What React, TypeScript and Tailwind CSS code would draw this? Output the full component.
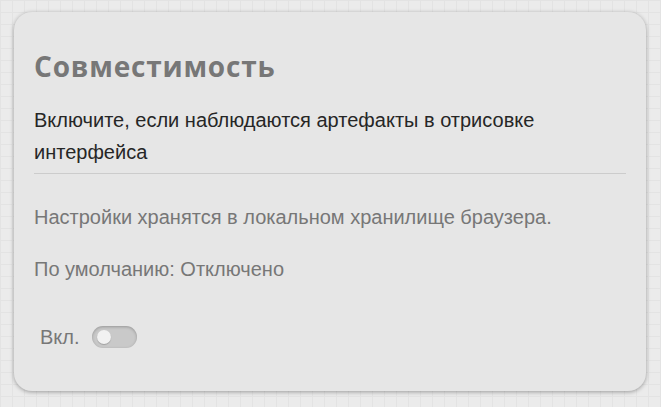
import React, { useState } from 'react';

const Toggle: React.FC<{ on: boolean; onChange: (v: boolean) => void }> = ({ on, onChange }) => (
  <button
    type="button"
    onClick={() => onChange(!on)}
    className={
      'relative h-[22px] w-[45px] rounded-full shadow-[inset_0_1px_3px_rgba(0,0,0,0.25)] ' +
      (on ? 'bg-[#8a8a8a]' : 'bg-[#c9c9c9]')
    }
  >
    <span
      className={
        'absolute top-[4px] h-[14px] w-[14px] rounded-full bg-[#f2f2f2] shadow-[0_1px_1px_rgba(0,0,0,0.2)] ' +
        (on ? 'left-[26px]' : 'left-[5px]')
      }
    />
  </button>
);

export default function App() {
  const [enabled, setEnabled] = useState(false);

  return (
    <div
      className="min-h-[407px] w-full bg-[#ebebeb] px-[14px] pt-[12px] pb-[16px]"
      style={{
        backgroundImage:
          'linear-gradient(#e3e3e3 1px, transparent 1px), linear-gradient(90deg, #e3e3e3 1px, transparent 1px)',
        backgroundSize: '12px 12px',
      }}
    >
      <div className="h-[379px] w-[632px] rounded-[18px] bg-[#e6e6e6] px-[20px] pt-[36px] shadow-[0_1px_4px_rgba(0,0,0,0.35)] font-['Liberation_Sans',Arial,sans-serif]">
        <h2 className="font-['Open_Sans',sans-serif] text-[28px] leading-[36px] font-bold tracking-[0.8px] text-[#777777]">
          Совместимость
        </h2>
        <p className="mt-[20px] text-[20px] leading-[32px] text-[#262626]">
          Включите, если наблюдаются артефакты в отрисовке интерфейса
        </p>
        <div className="mt-[5px] h-px bg-[#cccccc]" />
        <p className="mt-[27px] text-[20px] leading-[32px] text-[#777777]">
          Настройки хранятся в локальном хранилище браузера.
        </p>
        <p className="mt-[20px] text-[20px] leading-[32px] text-[#777777]">
          По умолчанию: Отключено
        </p>
        <div className="mt-[36px] flex items-center gap-[12px] pl-[6px]">
          <span className="text-[20px] leading-[32px] text-[#777777]">Вкл.</span>
          <Toggle on={enabled} onChange={setEnabled} />
        </div>
      </div>
    </div>
  );
}
